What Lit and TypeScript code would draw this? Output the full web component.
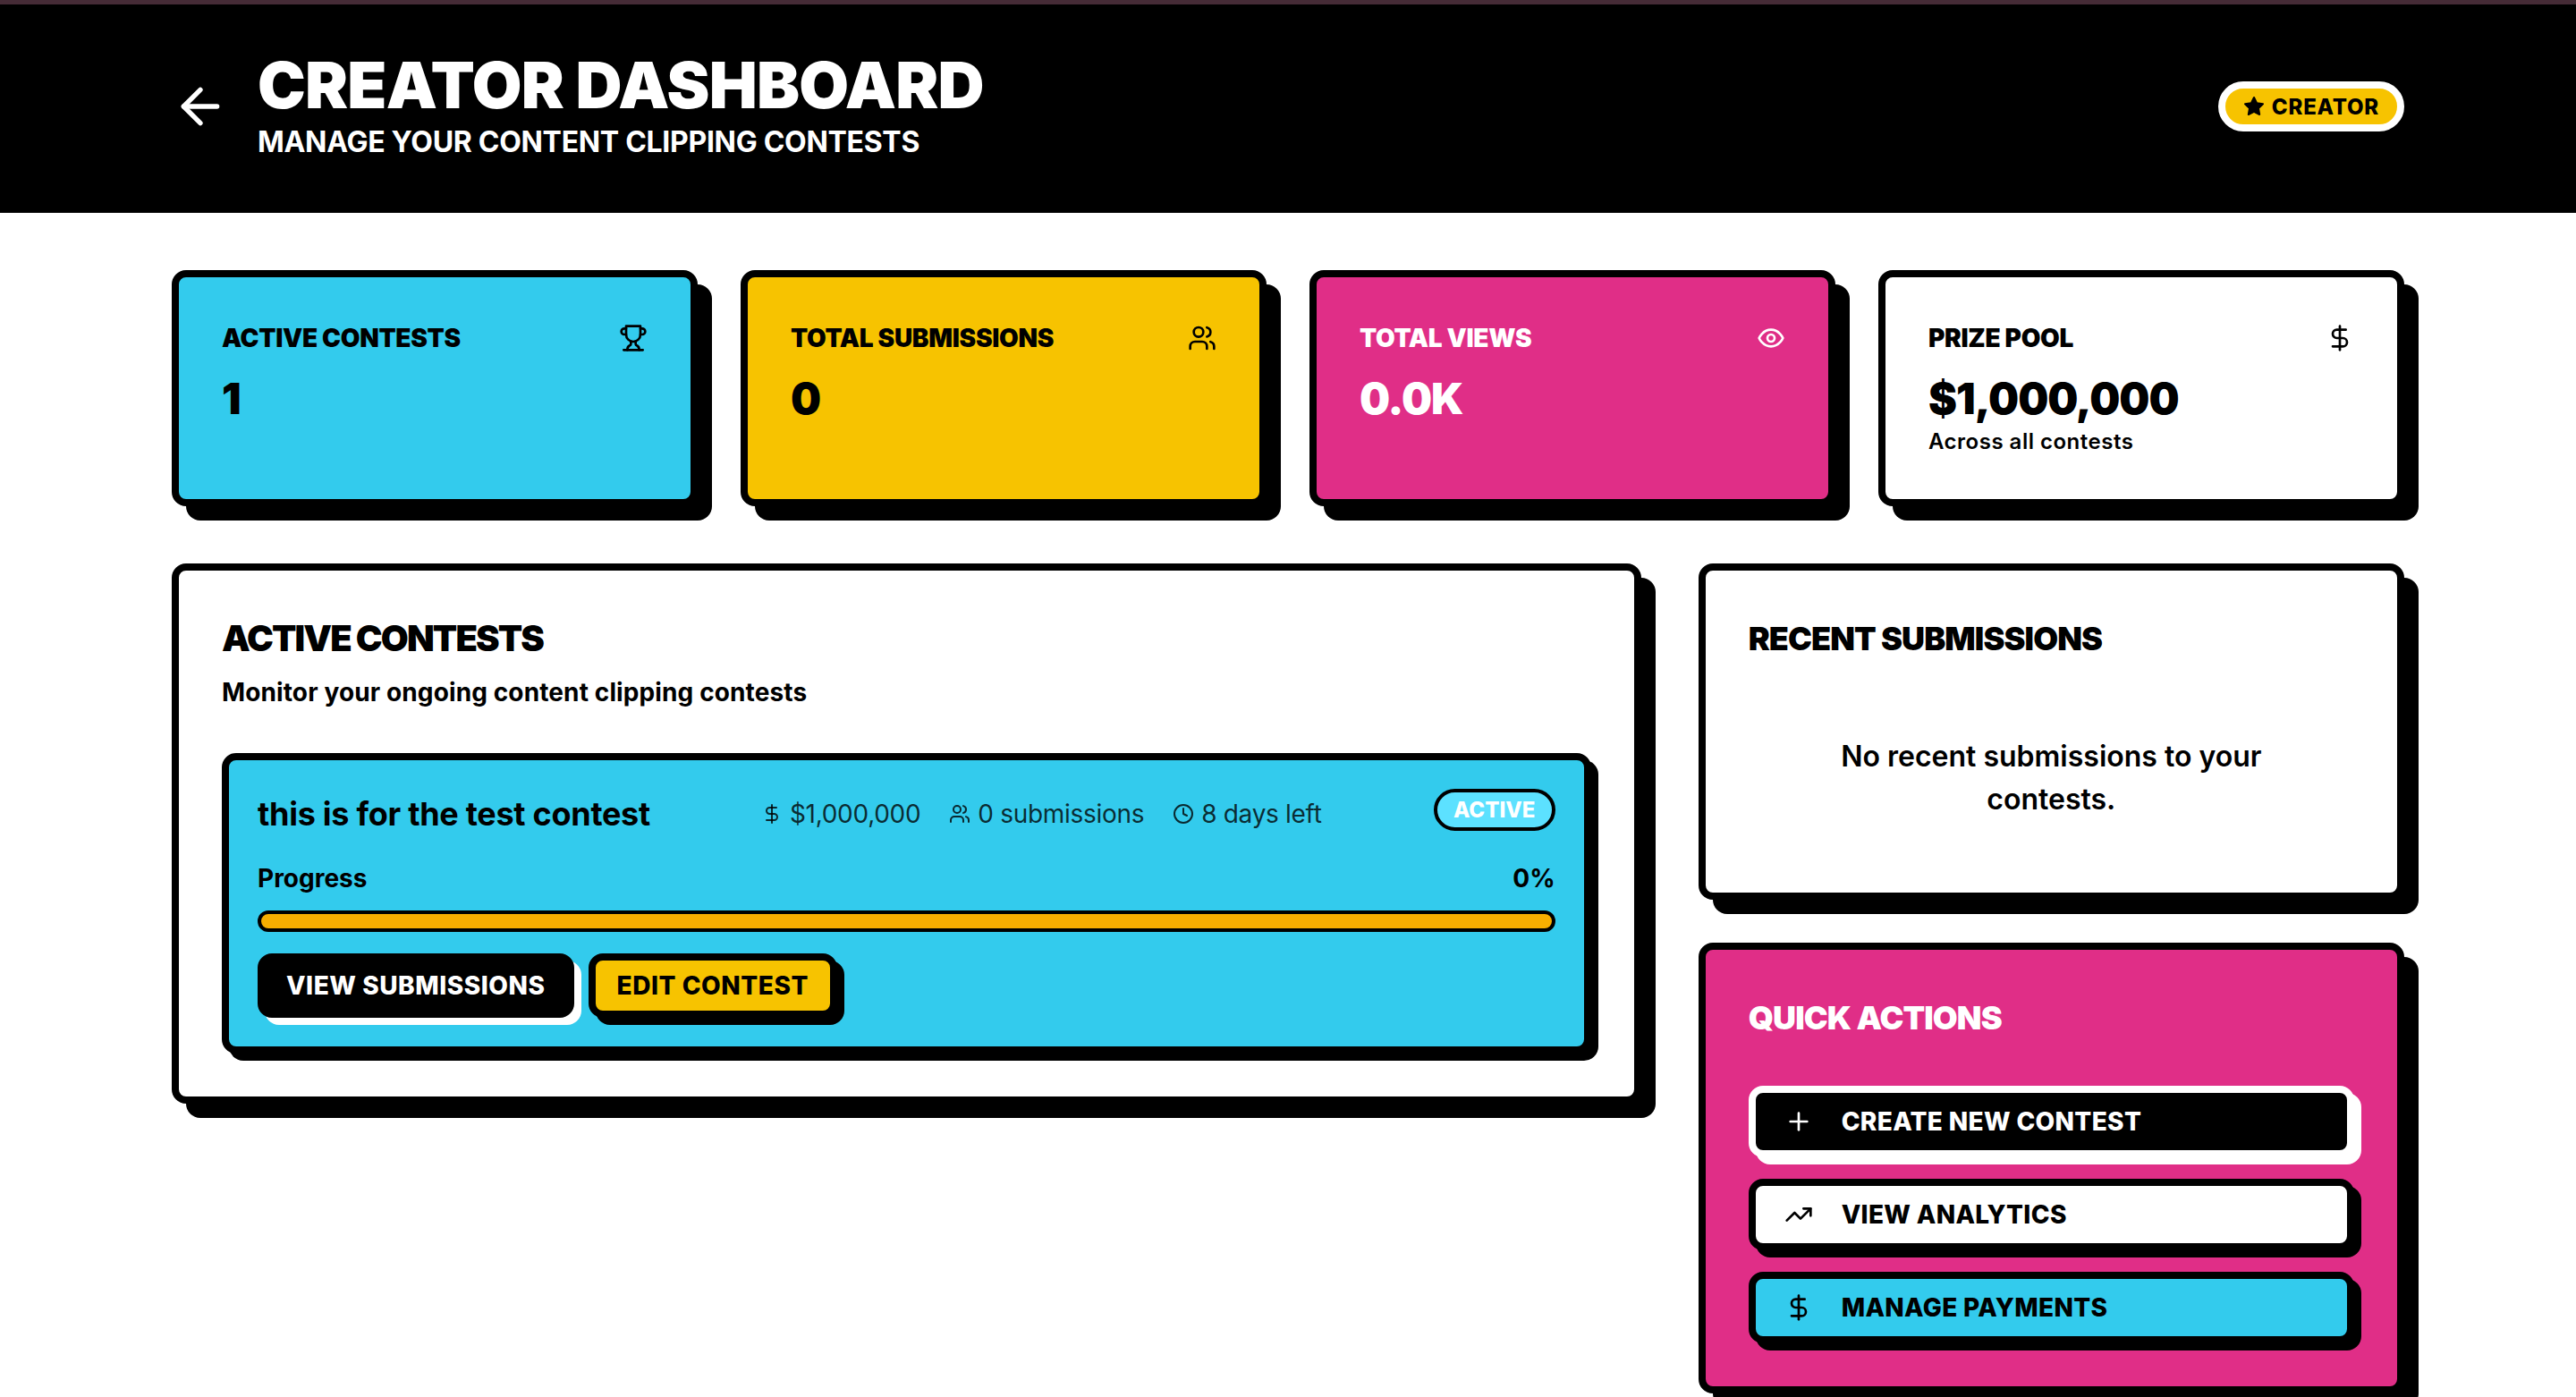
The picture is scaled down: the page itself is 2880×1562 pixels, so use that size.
import { LitElement, html, css, svg } from 'lit';
import { customElement } from 'lit/decorators.js';

const icons = {
  arrowLeft: svg`<path d="m12 19-7-7 7-7"/><path d="M19 12H5"/>`,
  trophy: svg`<path d="M6 9H4.5a2.5 2.5 0 0 1 0-5H6"/><path d="M18 9h1.5a2.5 2.5 0 0 0 0-5H18"/><path d="M4 22h16"/><path d="M10 14.66V17c0 .55-.47.98-.97 1.21C7.85 18.75 7 20.24 7 22"/><path d="M14 14.66V17c0 .55.47.98.97 1.21C16.15 18.75 17 20.24 17 22"/><path d="M18 2H6v7a6 6 0 0 0 12 0V2Z"/>`,
  users: svg`<path d="M16 21v-2a4 4 0 0 0-4-4H6a4 4 0 0 0-4 4v2"/><circle cx="9" cy="7" r="4"/><path d="M22 21v-2a4 4 0 0 0-3-3.87"/><path d="M16 3.13a4 4 0 0 1 0 7.75"/>`,
  eye: svg`<path d="M2 12s3-7 10-7 10 7 10 7-3 7-10 7-10-7-10-7Z"/><circle cx="12" cy="12" r="3"/>`,
  dollar: svg`<line x1="12" x2="12" y1="2" y2="22"/><path d="M17 5H9.5a3.5 3.5 0 0 0 0 7h5a3.5 3.5 0 0 1 0 7H6"/>`,
  clock: svg`<circle cx="12" cy="12" r="10"/><polyline points="12 6 12 12 16 14"/>`,
  plus: svg`<path d="M5 12h14"/><path d="M12 5v14"/>`,
  trending: svg`<polyline points="22 7 13.5 15.5 8.5 10.5 2 17"/><polyline points="16 7 22 7 22 13"/>`,
  star: svg`<polygon fill="currentColor" points="12 2 15.09 8.26 22 9.27 17 14.14 18.18 21.02 12 17.77 5.82 21.02 7 14.14 2 9.27 8.91 8.26 12 2"/>`,
};

const icon = (name: keyof typeof icons, size: number) => html`
  <svg class="icon" width=${size} height=${size} viewBox="0 0 24 24" fill="none" stroke="currentColor"
    stroke-width="2" stroke-linecap="round" stroke-linejoin="round">${icons[name]}</svg>
`;

const stats = [
  { label: 'Active Contests', value: '1', icon: 'trophy', tone: 'cyan' },
  { label: 'Total Submissions', value: '0', icon: 'users', tone: 'yellow' },
  { label: 'Total Views', value: '0.0K', icon: 'eye', tone: 'pink' },
  { label: 'Prize Pool', value: '$1,000,000', icon: 'dollar', tone: 'white', sub: 'Across all contests' },
] as const;

const actions = [
  { label: 'Create New Contest', icon: 'plus', tone: 'dark' },
  { label: 'View Analytics', icon: 'trending', tone: 'light' },
  { label: 'Manage Payments', icon: 'dollar', tone: 'sky' },
] as const;

@customElement('app-root')
export class AppRoot extends LitElement {
  static styles = css`
    :host {
      display: block;
      position: relative;
      height: 1562px;
      overflow: hidden;
      background: #fff;
      color: #000;
      font-family: Inter, "Liberation Sans", sans-serif;
    }
    .icon {
      display: block;
      flex: none;
    }
    .strip {
      position: absolute;
      top: 0;
      left: 0;
      right: 0;
      height: 5px;
      background: #452b36;
    }
    .header {
      height: 238px;
      box-sizing: border-box;
      padding: 0 192px;
      display: flex;
      align-items: center;
      justify-content: space-between;
      background: #000;
      color: #fff;
    }
    .header-left {
      display: flex;
      align-items: center;
      gap: 32px;
    }
    .back {
      all: unset;
      color: #fff;
    }
    .header h1 {
      margin: 0;
      font-size: 72px;
      line-height: 80px;
      font-weight: 900;
      letter-spacing: -0.8px;
      text-transform: uppercase;
    }
    .header p {
      margin: 0;
      font-size: 32px;
      line-height: 48px;
      font-weight: 700;
      letter-spacing: -0.3px;
      text-transform: uppercase;
    }
    .creator {
      display: flex;
      align-items: center;
      gap: 8px;
      height: 56px;
      box-sizing: border-box;
      padding: 0 20px;
      border: 8px solid #fff;
      border-radius: 999px;
      background: #f7c300;
      color: #000;
      font-size: 24px;
      font-weight: 800;
      letter-spacing: 0.8px;
      text-transform: uppercase;
    }
    .content {
      padding: 64px 192px;
    }
    .stats {
      display: grid;
      grid-template-columns: repeat(4, 1fr);
      gap: 48px;
      margin-bottom: 64px;
    }
    .box {
      box-sizing: border-box;
      border: 8px solid #000;
      border-radius: 16px;
      box-shadow: 16px 16px 0 #000;
      padding: 48px;
      background: #fff;
    }
    .cyan {
      background: #33cbed;
    }
    .yellow {
      background: #f7c300;
    }
    .pink {
      background: #e02e87;
      color: #fff;
    }
    .white {
      background: #fff;
    }
    .stat-head {
      display: flex;
      align-items: center;
      justify-content: space-between;
      height: 40px;
      margin-bottom: 16px;
      font-size: 28px;
      font-weight: 900;
      letter-spacing: -0.3px;
      text-transform: uppercase;
    }
    .stat-value {
      font-size: 48px;
      line-height: 64px;
      font-weight: 900;
      letter-spacing: -1px;
    }
    .stat-sub {
      font-size: 24px;
      line-height: 32px;
      font-weight: 600;
      letter-spacing: 0.5px;
    }
    .main {
      display: grid;
      grid-template-columns: repeat(3, 1fr);
      gap: 64px;
      align-items: start;
    }
    .main-left {
      grid-column: span 2;
    }
    .main-right {
      display: flex;
      flex-direction: column;
      gap: 48px;
    }
    h2 {
      margin: 0;
      font-size: 36px;
      line-height: 56px;
      font-weight: 900;
      letter-spacing: -0.9px;
      text-transform: uppercase;
    }
    .main-left h2 {
      font-size: 40px;
      letter-spacing: -1.9px;
    }
    .desc {
      margin: 12px 0 48px;
      font-size: 28px;
      line-height: 40px;
      font-weight: 700;
      letter-spacing: 0.12px;
    }
    .contest {
      box-sizing: border-box;
      border: 8px solid #000;
      border-radius: 16px;
      box-shadow: 8px 8px 0 #000;
      padding: 32px;
    }
    .contest-top {
      display: flex;
      align-items: flex-start;
      justify-content: space-between;
      margin-bottom: 24px;
    }
    .contest-info {
      display: flex;
      align-items: center;
      gap: 124px;
      height: 56px;
    }
    .contest-info h3 {
      margin: 0;
      font-size: 36px;
      font-weight: 700;
      letter-spacing: -0.27px;
    }
    .meta {
      display: flex;
      align-items: center;
      gap: 32px;
      font-size: 28px;
      letter-spacing: -0.3px;
      color: rgba(0, 0, 0, 0.8);
    }
    .meta span {
      display: flex;
      align-items: center;
      gap: 8px;
    }
    .status {
      box-sizing: border-box;
      height: 47px;
      width: 136px;
      display: flex;
      align-items: center;
      justify-content: center;
      border: 4px solid #000;
      border-radius: 999px;
      background: #5ce1ff;
      color: #fff;
      font-size: 24px;
      font-weight: 800;
    }
    .progress-head {
      display: flex;
      justify-content: space-between;
      height: 40px;
      align-items: center;
      margin-bottom: 16px;
      font-size: 28px;
      font-weight: 700;
    }
    .progress {
      box-sizing: border-box;
      height: 24px;
      border: 4px solid #000;
      border-radius: 999px;
      background: #f7ae00;
      margin-bottom: 24px;
    }
    .buttons {
      display: flex;
      gap: 16px;
    }
    .btn {
      all: unset;
      box-sizing: border-box;
      display: flex;
      align-items: center;
      height: 72px;
      border: 8px solid #000;
      border-radius: 16px;
      padding: 0 24px;
      font-size: 28px;
      font-weight: 800;
      letter-spacing: 0.55px;
      text-transform: uppercase;
    }
    .btn-dark {
      background: #000;
      color: #fff;
      box-shadow: 8px 8px 0 #fff;
    }
    .btn-yellow {
      background: #f7c300;
      box-shadow: 8px 8px 0 #000;
    }
    .empty {
      margin: 48px 0 0;
      padding: 32px;
      text-align: center;
      font-size: 32px;
      line-height: 48px;
      font-weight: 600;
    }
    .quick h2 {
      margin-bottom: 48px;
    }
    .quick-list {
      display: flex;
      flex-direction: column;
      gap: 24px;
    }
    .action {
      all: unset;
      box-sizing: border-box;
      display: flex;
      align-items: center;
      gap: 32px;
      height: 80px;
      padding: 0 32px;
      border: 8px solid #000;
      border-radius: 16px;
      box-shadow: 8px 8px 0 #000;
      color: #000;
      font-size: 28px;
      font-weight: 800;
      letter-spacing: 0.35px;
      text-transform: uppercase;
    }
    .action.dark {
      background: #000;
      color: #fff;
      border-color: #fff;
      box-shadow: 8px 8px 0 #fff;
    }
    .action.light {
      background: #fff;
    }
    .action.sky {
      background: #33cbed;
    }
  `;

  render() {
    return html`
      <div class="strip"></div>
      <header class="header">
        <div class="header-left">
          <button class="back">${icon('arrowLeft', 64)}</button>
          <div>
            <h1>Creator Dashboard</h1>
            <p>Manage your content clipping contests</p>
          </div>
        </div>
        <div class="creator">${icon('star', 24)}Creator</div>
      </header>
      <main class="content">
        <section class="stats">
          ${stats.map(
            (s) => html`
              <div class="box ${s.tone}">
                <div class="stat-head">${s.label}${icon(s.icon, 32)}</div>
                <div class="stat-value">${s.value}</div>
                ${'sub' in s ? html`<div class="stat-sub">${s.sub}</div>` : ''}
              </div>
            `
          )}
        </section>
        <section class="main">
          <div class="box main-left">
            <h2>Active Contests</h2>
            <p class="desc">Monitor your ongoing content clipping contests</p>
            <div class="contest cyan">
              <div class="contest-top">
                <div class="contest-info">
                  <h3>this is for the test contest</h3>
                  <div class="meta">
                    <span>${icon('dollar', 24)}$1,000,000</span>
                    <span>${icon('users', 24)}0 submissions</span>
                    <span>${icon('clock', 24)}8 days left</span>
                  </div>
                </div>
                <div class="status">ACTIVE</div>
              </div>
              <div class="progress-head"><span>Progress</span><span>0%</span></div>
              <div class="progress"></div>
              <div class="buttons">
                <button class="btn btn-dark">View Submissions</button>
                <button class="btn btn-yellow">Edit Contest</button>
              </div>
            </div>
          </div>
          <div class="main-right">
            <div class="box">
              <h2>Recent Submissions</h2>
              <p class="empty">No recent submissions to your contests.</p>
            </div>
            <div class="box pink quick">
              <h2>Quick Actions</h2>
              <div class="quick-list">
                ${actions.map(
                  (a) => html`<button class="action ${a.tone}">${icon(a.icon, 32)}${a.label}</button>`
                )}
              </div>
            </div>
          </div>
        </section>
      </main>
    `;
  }
}
